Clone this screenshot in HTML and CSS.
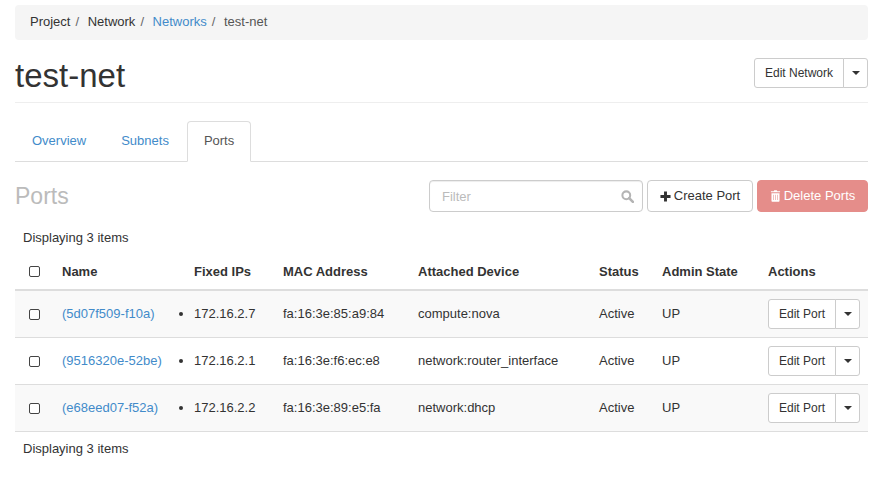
FILE: index.html
```html
<!DOCTYPE html>
<html lang="en">
<head>
<meta charset="utf-8">
<title>test-net</title>
<link rel="stylesheet" href="styles.css">
</head>
<body>
<div class="page">
  <ol class="breadcrumb">
    <li>Project</li>
    <li>Network</li>
    <li><a href="#">Networks</a></li>
    <li class="current">test-net</li>
  </ol>
  <div class="page-header">
    <h1>test-net</h1>
    <div class="btn-group">
      <button class="btn btn-main">Edit Network</button>
      <button class="btn btn-caret"><span class="caret"></span></button>
    </div>
  </div>
  <ul class="tabs">
    <li><a href="#">Overview</a></li>
    <li><a href="#">Subnets</a></li>
    <li class="active"><a href="#">Ports</a></li>
  </ul>
  <div class="toolbar">
    <h2>Ports</h2>
    <div class="actions">
      <div class="filter">
        <input type="text" placeholder="Filter">
        <svg class="search" viewBox="0 0 14 14" width="13" height="13"><circle cx="5.7" cy="5.7" r="4.2" fill="none" stroke="currentColor" stroke-width="2.2"/><path d="M8.8 8.8l4 4" stroke="currentColor" stroke-width="2.8" stroke-linecap="round"/></svg>
      </div>
      <button class="btn btn-tool"><svg class="ico" viewBox="0 0 12 12" width="11" height="11"><path d="M4.4 0.5h3.2v3.9h3.9v3.2H7.6v3.9H4.4V7.6H0.5V4.4h3.9z" fill="currentColor"/></svg>Create Port</button>
      <button class="btn btn-tool btn-danger"><svg class="ico" viewBox="0 0 12 13" width="11" height="12"><path d="M4 1.2L4.6.3h2.8l.6.9h3v1.2H1V1.2zM1.6 3.4h8.8v8.2c0 .7-.5 1.2-1.1 1.2H2.7c-.6 0-1.1-.5-1.1-1.2zM3.7 5v5.8h.6V5zm2 0v5.8h.6V5zm2 0v5.8h.6V5z" fill="currentColor" fill-rule="evenodd"/></svg>Delete Ports</button>
    </div>
  </div>
  <table class="ports">
    <colgroup>
      <col class="col-check"><col class="col-name"><col class="col-ip"><col class="col-mac"><col class="col-device"><col class="col-status"><col class="col-admin"><col class="col-actions">
    </colgroup>
    <thead>
      <tr class="count count-top"><td colspan="8">Displaying 3 items</td></tr>
      <tr class="heads">
        <th class="cell-check"><input type="checkbox" class="check"></th>
        <th>Name</th>
        <th>Fixed IPs</th>
        <th>MAC Address</th>
        <th>Attached Device</th>
        <th>Status</th>
        <th>Admin State</th>
        <th>Actions</th>
      </tr>
    </thead>
    <tbody>
      <tr>
        <td class="cell-check"><input type="checkbox" class="check"></td>
        <td><a href="#">(5d07f509-f10a)</a></td>
        <td><ul class="ips"><li>172.16.2.7</li></ul></td>
        <td>fa:16:3e:85:a9:84</td>
        <td>compute:nova</td>
        <td>Active</td>
        <td>UP</td>
        <td><div class="btn-group"><button class="btn btn-main btn-row">Edit Port</button><button class="btn btn-caret btn-row-caret"><span class="caret"></span></button></div></td>
      </tr>
      <tr>
        <td class="cell-check"><input type="checkbox" class="check"></td>
        <td><a href="#">(9516320e-52be)</a></td>
        <td><ul class="ips"><li>172.16.2.1</li></ul></td>
        <td>fa:16:3e:f6:ec:e8</td>
        <td>network:router_interface</td>
        <td>Active</td>
        <td>UP</td>
        <td><div class="btn-group"><button class="btn btn-main btn-row">Edit Port</button><button class="btn btn-caret btn-row-caret"><span class="caret"></span></button></div></td>
      </tr>
      <tr>
        <td class="cell-check"><input type="checkbox" class="check"></td>
        <td><a href="#">(e68eed07-f52a)</a></td>
        <td><ul class="ips"><li>172.16.2.2</li></ul></td>
        <td>fa:16:3e:89:e5:fa</td>
        <td>network:dhcp</td>
        <td>Active</td>
        <td>UP</td>
        <td><div class="btn-group"><button class="btn btn-main btn-row">Edit Port</button><button class="btn btn-caret btn-row-caret"><span class="caret"></span></button></div></td>
      </tr>
    </tbody>
    <tfoot>
      <tr class="count"><td colspan="8">Displaying 3 items</td></tr>
    </tfoot>
  </table>
</div>
</body>
</html>
```
FILE: styles.css
```css
* { box-sizing: border-box; }
html, body { margin: 0; padding: 0; background: #fff; }
body {
  font-family: "Liberation Sans", Arial, sans-serif;
  font-size: 13px;
  line-height: 18.57px;
  color: #333;
  overflow: hidden;
}
a { color: #428bca; text-decoration: none; }
.page { padding: 5px 7px 0 15px; }

.breadcrumb {
  display: flex;
  list-style: none;
  margin: 0;
  padding: 8px 15px;
  height: 35px;
  background: #f5f5f5;
  border-radius: 4px;
}
.breadcrumb li + li::before {
  content: "/";
  padding: 0 8.6px 0 5px;
  color: #666;
}
.breadcrumb .current { color: #555; }

.page-header {
  display: flex;
  justify-content: space-between;
  align-items: flex-start;
  margin-top: 18px;
  height: 45px;
  border-bottom: 1px solid #eee;
}
.page-header h1 {
  margin: 0;
  font-size: 33px;
  font-weight: 400;
  line-height: 36px;
}
.btn-group { display: inline-flex; }
.btn {
  font-family: inherit;
  font-size: 12px;
  line-height: 16px;
  color: #333;
  background: #fff;
  border: 1px solid #ccc;
  border-radius: 3px;
  padding: 0;
  height: 30px;
  cursor: pointer;
}
.btn-main {
  width: 90px;
  border-radius: 3px 0 0 3px;
}
.btn-caret {
  width: 25px;
  margin-left: -1px;
  border-radius: 0 3px 3px 0;
  display: flex;
  align-items: center;
  justify-content: center;
}
.btn-row { width: 68px; }
.btn-row-caret { width: 25px; }
.caret {
  display: block;
  width: 0;
  height: 0;
  border-top: 4px solid #333;
  border-left: 4px solid transparent;
  border-right: 4px solid transparent;
}

.tabs {
  display: flex;
  list-style: none;
  margin: 18px 0 0;
  padding: 0;
  height: 41px;
  border-bottom: 1px solid #ddd;
}
.tabs li { height: 41px; margin-right: 1px; }
.tabs a {
  display: block;
  height: 41px;
  padding: 10px 16px 0;
  border: 1px solid transparent;
  border-radius: 4px 4px 0 0;
}
.tabs .active a {
  color: #555;
  background: #fff;
  border-color: #ddd #ddd #fff;
}

.toolbar {
  display: flex;
  justify-content: space-between;
  align-items: flex-start;
  margin-top: 18px;
  height: 34px;
}
.toolbar h2 {
  margin: 0;
  font-size: 23px;
  font-weight: 400;
  line-height: 33px;
  color: #bbb;
}
.actions { display: flex; align-items: flex-start; gap: 4px; }
.filter { position: relative; width: 214px; }
.filter input {
  display: block;
  width: 100%;
  height: 32px;
  padding: 0 12px;
  font: inherit;
  color: #555;
  border: 1px solid #ccc;
  border-radius: 4px;
  box-shadow: inset 0 1px 1px rgba(0, 0, 0, .075);
  outline: none;
}
.filter input::placeholder { color: #bbb; opacity: 1; }
.search {
  position: absolute;
  right: 9px;
  top: 10px;
  color: #b4b4b4;
}
.btn-tool {
  display: inline-flex;
  align-items: center;
  justify-content: center;
  height: 32px;
  width: 106px;
  font-size: 13px;
  border-radius: 4px;
}
.btn-danger {
  width: 111px;
  color: #fff;
  background: #e58d8a;
  border-color: #e58d8a;
}
.ico { margin-right: 3px; }

.ports {
  border-collapse: separate;
  border-spacing: 0;
  width: 853px;
  table-layout: fixed;
  margin-top: 6px;
  white-space: nowrap;
  line-height: 18px;
}
.ports td, .ports th { padding: 8px; text-align: left; vertical-align: middle; }
.ports .count td { height: 34px; }
.ports .count-top td { padding: 9px 8px 7px; }
.heads th {
  height: 37px;
  font-weight: 700;
  border-bottom: 2px solid #ddd;
}
.ports tbody td {
  height: 47px;
  border-bottom: 1px solid #ddd;
}
.ports tbody tr:nth-child(odd) { background: #f9f9f9; }
.col-check { width: 39px; }
.col-name { width: 132px; }
.col-ip { width: 89px; }
.col-mac { width: 135px; }
.col-device { width: 181px; }
.col-status { width: 63px; }
.col-admin { width: 106px; }
.col-actions { width: 108px; }
.ports .cell-check { padding-left: 14px; padding-right: 0; }
.check {
  display: block;
  appearance: none;
  margin: 0;
  width: 11px;
  height: 11px;
  background: #fff;
  border: 1px solid #444;
  border-radius: 2px;
}
.ips { margin: 0; padding: 0; list-style: disc outside; }
```
